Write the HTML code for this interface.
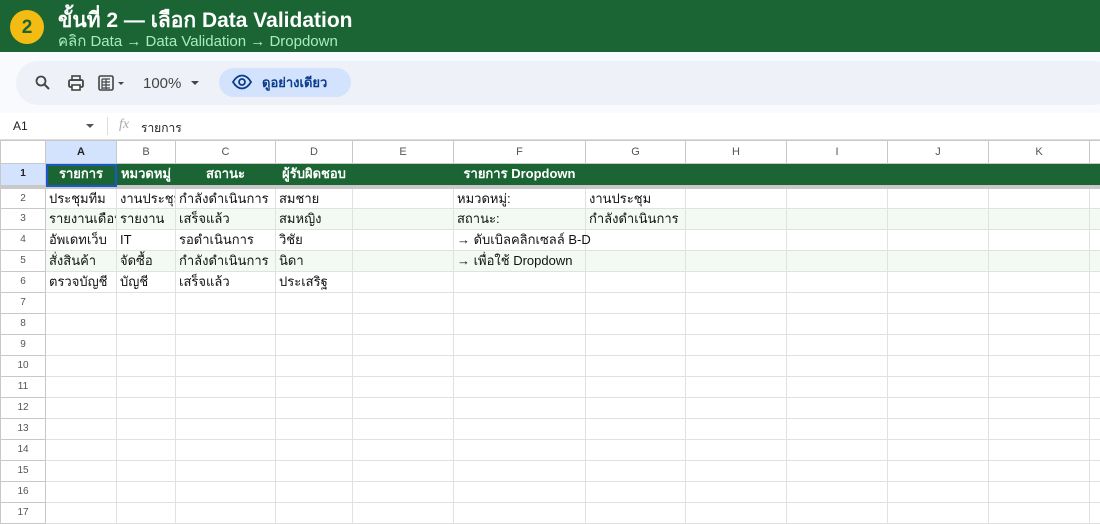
<!DOCTYPE html>
<html><head><meta charset="utf-8"><style>
*{margin:0;padding:0;box-sizing:border-box}
body{width:1100px;height:522px;overflow:hidden;background:#fff;font-family:"Liberation Sans","Noto Sans CJK SC",sans-serif;position:relative}
.top{position:absolute;left:0;top:0;width:1100px;height:52px;background:#1b6534}
.badge{position:absolute;left:10px;top:10px;width:34px;height:34px;border-radius:50%;background:#f4bb12;color:#1b6534;font-weight:bold;font-size:19px;text-align:center;line-height:35px}
.t1{position:absolute;left:58px;top:9px;color:#fff;font-weight:bold;font-size:21px;line-height:24px}
.t2{position:absolute;left:58px;top:33px;color:#a8ecbb;font-size:15px;line-height:17px}
.tb{position:absolute;left:0;top:52px;width:1100px;height:61px;background:#f8fafd}
.pill{position:absolute;left:16px;top:9px;width:1100px;height:44px;border-radius:22px;background:#eef2f8}
.tb span{position:absolute;color:#444;font-size:15px}
.view{position:absolute;left:219px;top:16px;width:132px;height:29px;border-radius:15px;background:#d3e3fd;color:#0b3d8c;font-weight:bold;font-size:13px;line-height:29px;padding-left:43px}
.fx{position:absolute;left:0;top:113px;width:1100px;height:27px;border-bottom:1px solid #ddd;font-size:12px;color:#222}
table{position:absolute;left:0;top:140px;border-collapse:collapse;table-layout:fixed;font-size:13px;width:1119px}
td{border:1px solid #e1e1e1;height:21px;line-height:19px;padding:0 3px;white-space:nowrap;overflow:hidden;color:#111}
tr.h td{height:23px;text-align:center;color:#555;font-size:11px;border-color:#c8c8c8}
td.rn{text-align:center;color:#555;font-size:10px;border-color:#c8c8c8}
tr.r1 td{background:#1b6534;color:#fff;font-weight:bold;text-align:center;height:23px;line-height:18px;border-color:#1b6534;border-bottom:4px solid #c8c8c8}
tr.r1 td.rn{background:#d3e3fd;color:#222;border-color:#c8c8c8;border-bottom:4px solid #c8c8c8}
tr.g td{background:#f3faf3}
tr.g td.rn{background:#fff}
</style></head><body>
<div class="top"><div class="badge">2</div>
<div class="t1">ขั้นที่ 2 — เลือก Data Validation</div>
<div class="t2">คลิก Data → Data Validation → Dropdown</div></div>
<div class="tb"><div class="pill"></div>
<svg style="position:absolute;left:34px;top:22px" width="18" height="18" viewBox="0 0 18 18"><circle cx="7" cy="7" r="4.5" fill="none" stroke="#444" stroke-width="1.8"/><path d="M10.5 10.5L15 15" stroke="#444" stroke-width="2"/></svg>
<svg style="position:absolute;left:67px;top:22px" width="18" height="18" viewBox="0 0 18 18"><rect x="2" y="6" width="14" height="7" rx="1.5" fill="none" stroke="#444" stroke-width="1.8"/><rect x="5" y="2" width="8" height="4" fill="none" stroke="#444" stroke-width="1.6"/><rect x="5" y="11" width="8" height="5" fill="#fff" stroke="#444" stroke-width="1.6"/></svg>
<svg style="position:absolute;left:97px;top:22px" width="30" height="18" viewBox="0 0 30 18"><rect x="2" y="2" width="14" height="14" rx="1.5" fill="none" stroke="#444" stroke-width="1.6"/><path d="M5 5h8M5 8h8M5 11h8M5 14h8M9 5v10M5 5v10" stroke="#444" stroke-width="1.2"/><path d="M21 8l3 3 3-3z" fill="#444"/></svg>
<span style="left:143px;top:23px">100%</span>
<svg style="position:absolute;left:190px;top:28px" width="10" height="6"><path d="M1 1l4 4 4-4z" fill="#444"/></svg>
<div class="view">ดูอย่างเดียว<svg style="position:absolute;left:13px;top:6px" width="20" height="16" viewBox="0 0 20 16"><path d="M1 8C4 3 7 1.5 10 1.5S16 3 19 8C16 13 13 14.5 10 14.5S4 13 1 8z" fill="none" stroke="#0b3d8c" stroke-width="1.8"/><circle cx="10" cy="8" r="3" fill="none" stroke="#0b3d8c" stroke-width="1.8"/></svg></div>
</div>
<div class="fx"><span style="position:absolute;left:13px;top:6px">A1</span><svg style="position:absolute;left:86px;top:11px" width="8" height="5"><path d="M0 0l4 4 4-4z" fill="#555"/></svg><div style="position:absolute;left:107px;top:4px;width:1px;height:18px;background:#ddd"></div><span style="position:absolute;left:119px;top:4px;color:#aaa;font-style:italic;font-family:'Liberation Serif',serif;font-size:14px">fx</span><span style="position:absolute;left:141px;top:6px">รายการ</span></div>
<table>
<colgroup><col style="width:45px"><col style="width:71px"><col style="width:59px"><col style="width:100px"><col style="width:77px"><col style="width:101px"><col style="width:132px"><col style="width:100px"><col style="width:101px"><col style="width:101px"><col style="width:101px"><col style="width:101px"><col style="width:30px"></colgroup>
<tr class="h"><td></td><td style="background:#d3e3fd;color:#222;font-weight:bold">A</td><td>B</td><td>C</td><td>D</td><td>E</td><td>F</td><td>G</td><td>H</td><td>I</td><td>J</td><td>K</td><td></td></tr>
<tr class="r1"><td class="rn">1</td><td style="outline:2px solid #1a57c9;outline-offset:-2px">รายการ</td><td>หมวดหมู่</td><td>สถานะ</td><td>ผู้รับผิดชอบ</td><td></td><td>รายการ Dropdown</td><td></td><td></td><td></td><td></td><td></td><td></td></tr>
<tr><td class="rn">2</td><td>ประชุมทีม</td><td>งานประชุม</td><td>กำลังดำเนินการ</td><td>สมชาย</td><td></td><td>หมวดหมู่:</td><td>งานประชุม</td><td></td><td></td><td></td><td></td><td></td></tr>
<tr class="g"><td class="rn">3</td><td>รายงานเดือน</td><td>รายงาน</td><td>เสร็จแล้ว</td><td>สมหญิง</td><td></td><td>สถานะ:</td><td>กำลังดำเนินการ</td><td></td><td></td><td></td><td></td><td></td></tr>
<tr><td class="rn">4</td><td>อัพเดทเว็บ</td><td>IT</td><td>รอดำเนินการ</td><td>วิชัย</td><td></td><td style="overflow:visible">→ ดับเบิลคลิกเซลล์ B-D</td><td></td><td></td><td></td><td></td><td></td><td></td></tr>
<tr class="g"><td class="rn">5</td><td>สั่งสินค้า</td><td>จัดซื้อ</td><td>กำลังดำเนินการ</td><td>นิดา</td><td></td><td>→ เพื่อใช้ Dropdown</td><td></td><td></td><td></td><td></td><td></td><td></td></tr>
<tr><td class="rn">6</td><td>ตรวจบัญชี</td><td>บัญชี</td><td>เสร็จแล้ว</td><td>ประเสริฐ</td><td></td><td></td><td></td><td></td><td></td><td></td><td></td><td></td></tr>
<tr><td class="rn">7</td><td></td><td></td><td></td><td></td><td></td><td></td><td></td><td></td><td></td><td></td><td></td><td></td></tr>
<tr><td class="rn">8</td><td></td><td></td><td></td><td></td><td></td><td></td><td></td><td></td><td></td><td></td><td></td><td></td></tr>
<tr><td class="rn">9</td><td></td><td></td><td></td><td></td><td></td><td></td><td></td><td></td><td></td><td></td><td></td><td></td></tr>
<tr><td class="rn">10</td><td></td><td></td><td></td><td></td><td></td><td></td><td></td><td></td><td></td><td></td><td></td><td></td></tr>
<tr><td class="rn">11</td><td></td><td></td><td></td><td></td><td></td><td></td><td></td><td></td><td></td><td></td><td></td><td></td></tr>
<tr><td class="rn">12</td><td></td><td></td><td></td><td></td><td></td><td></td><td></td><td></td><td></td><td></td><td></td><td></td></tr>
<tr><td class="rn">13</td><td></td><td></td><td></td><td></td><td></td><td></td><td></td><td></td><td></td><td></td><td></td><td></td></tr>
<tr><td class="rn">14</td><td></td><td></td><td></td><td></td><td></td><td></td><td></td><td></td><td></td><td></td><td></td><td></td></tr>
<tr><td class="rn">15</td><td></td><td></td><td></td><td></td><td></td><td></td><td></td><td></td><td></td><td></td><td></td><td></td></tr>
<tr><td class="rn">16</td><td></td><td></td><td></td><td></td><td></td><td></td><td></td><td></td><td></td><td></td><td></td><td></td></tr>
<tr><td class="rn">17</td><td></td><td></td><td></td><td></td><td></td><td></td><td></td><td></td><td></td><td></td><td></td><td></td></tr>
</table>
</body></html>
